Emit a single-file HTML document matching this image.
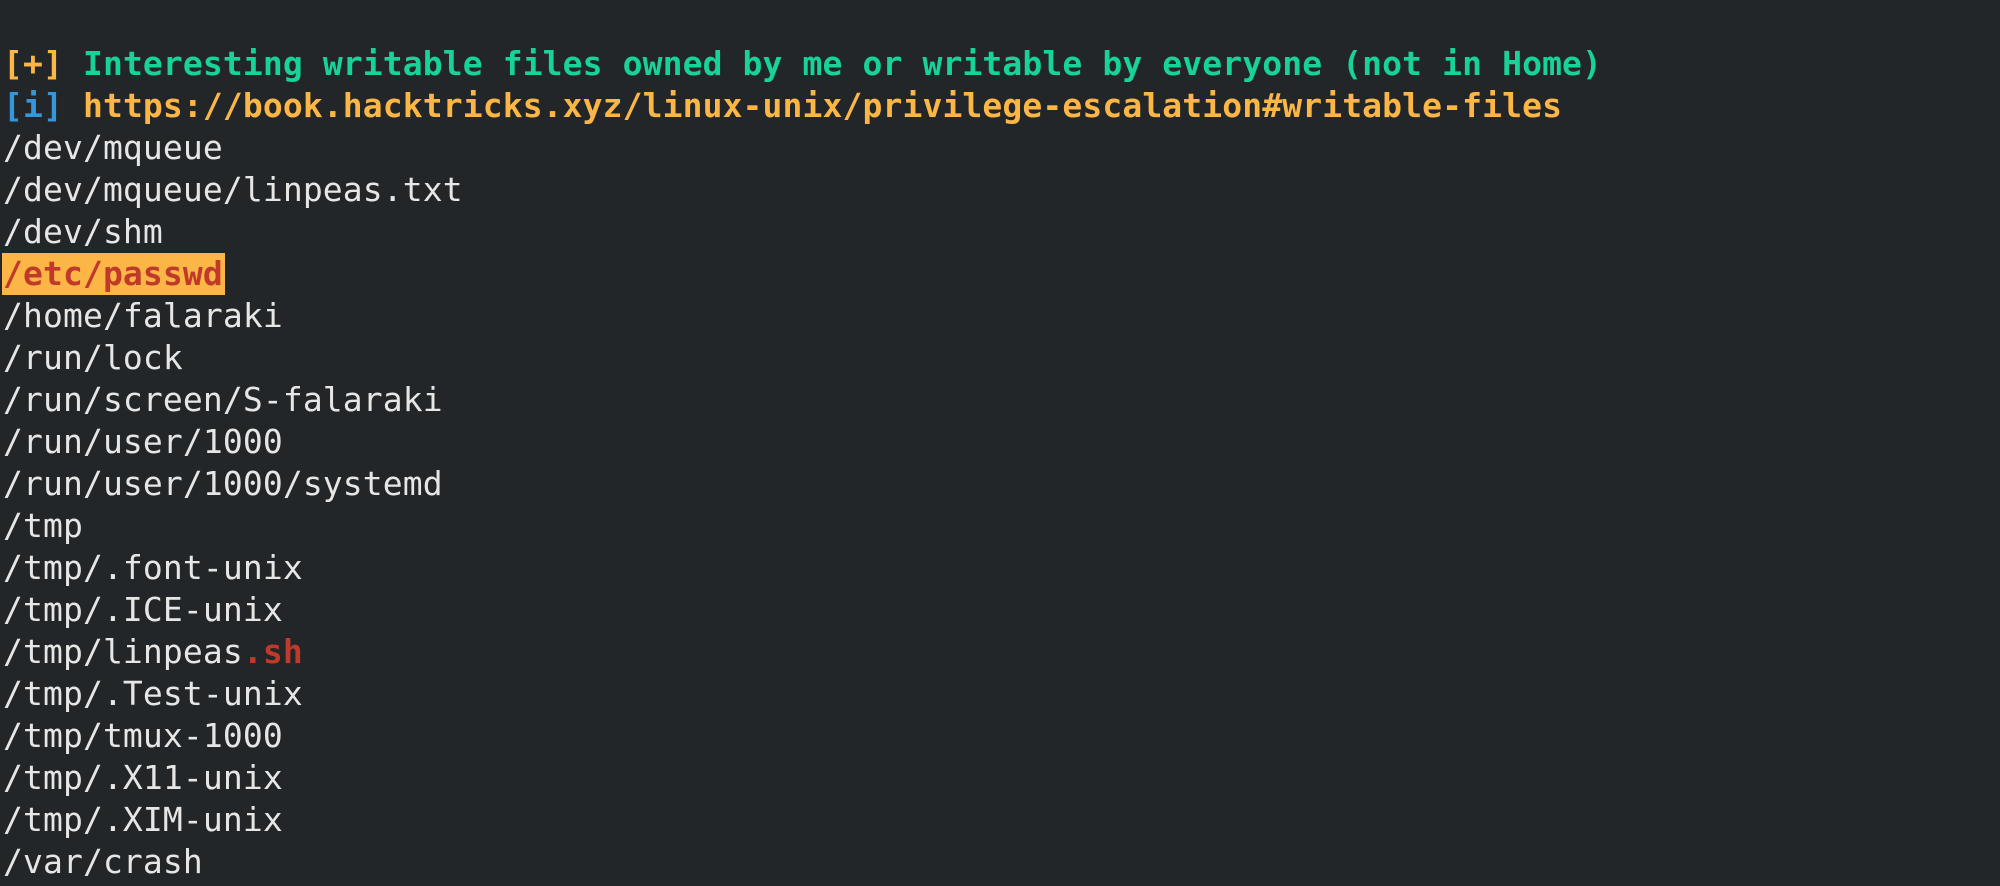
<!DOCTYPE html>
<html><head><meta charset="utf-8"><style>
html,body{margin:0;padding:0;background:#222628;width:2000px;height:886px;overflow:hidden}
pre{margin:0;padding:43px 0 0 3px;font-family:"DejaVu Sans Mono","Liberation Mono",monospace;font-size:33px;letter-spacing:0.12px;line-height:42px;color:#e6e6e6}
.b{font-weight:bold}
.y{color:#fbb646}
.g{color:#17d39a}
.c{color:#3397db}
.r{color:#c0392b;font-weight:bold}
.h{background:#fbb646;color:#c0392b;font-weight:bold;display:inline-block;padding-right:2px;margin-left:-1px;padding-left:1px}
</style></head><body><pre><span class="b"><span class="y">[+]</span> <span class="g">Interesting writable files owned by me or writable by everyone (not in Home)</span></span>
<span class="b"><span class="c">[i]</span> <span class="y">https://book.hacktricks.xyz/linux-unix/privilege-escalation#writable-files</span></span>
/dev/mqueue
/dev/mqueue/linpeas.txt
/dev/shm
<span class="h">/etc/passwd</span>
/home/falaraki
/run/lock
/run/screen/S-falaraki
/run/user/1000
/run/user/1000/systemd
/tmp
/tmp/.font-unix
/tmp/.ICE-unix
/tmp/linpeas<span class="r">.sh</span>
/tmp/.Test-unix
/tmp/tmux-1000
/tmp/.X11-unix
/tmp/.XIM-unix
/var/crash</pre></body></html>
